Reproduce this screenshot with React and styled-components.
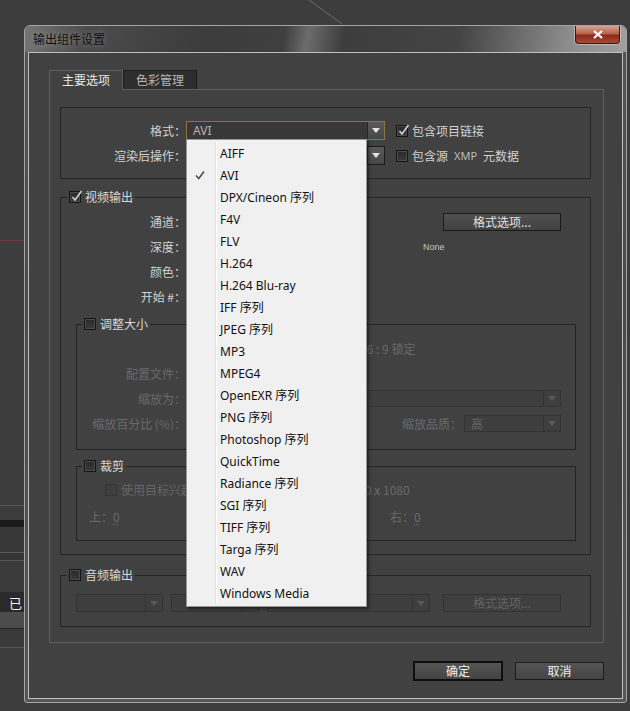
import React from 'react';
import styled, { createGlobalStyle } from 'styled-components';

const GlobalStyle = createGlobalStyle`
    html, body {
        margin: 0;
        padding: 0;
        background: #3d3d3d;
    }
    body {
        font-family: "Noto Sans", "Noto Sans CJK SC", sans-serif;
        font-size: 12px;
    }
    * {
        box-sizing: border-box;
    }
`

const Desktop = styled.div`
    display: flex;
    width: 630px;
    height: 711px;
    overflow: hidden;
    background: #3d3d3d;
`
const SideStrip = styled.div`
    flex: none;
    width: 24px;
    display: flex;
    flex-direction: column;
`
const Band = styled.div`
    flex: none;
    height: ${p => p.$h}px;
    background: ${p => p.$c || 'transparent'};
    color: #f2f2f2;
    font-family: "Noto Sans CJK SC", sans-serif;
    font-size: 13px;
    display: flex;
    align-items: center;
    justify-content: flex-end;
    padding-right: 2px;
`
const Stage = styled.div`
    flex: none;
    width: 603px;
    display: flex;
    flex-direction: column;
`
const Window = styled.div`
    width: 603px;
    border: 1px solid #a4a4a4;
    border-radius: 6px 6px 3px 3px;
    background: linear-gradient(180deg, #555 0%, #4a4a4a 40%, #565656 100%);
    overflow: hidden;
`
const TitleBar = styled.div`
    height: 26px;
    display: flex;
    align-items: flex-start;
    justify-content: space-between;
    padding-left: 8px;
    background: linear-gradient(100deg, #767676 0%, #4c4c4c 10%, #3c3c3c 30%, #3f3f3f 43%, #6c6c6c 47%, #3d3d3d 53%, #444 72%, #8c8c8c 90%, #a0a0a0 100%);
`
const Title = styled.span`
    font-family: "Noto Sans CJK SC", sans-serif;
    font-size: 12px;
    line-height: 26px;
    color: #111;
    text-shadow: 0 0 6px rgba(255, 255, 255, 0.35);
`
const CloseButton = styled.div`
    width: 45px;
    height: 18px;
    margin-right: 6px;
    border: 1px solid #3a1810;
    border-top: none;
    border-radius: 0 0 4px 4px;
    background: linear-gradient(180deg, #d9a294 0%, #b9604c 45%, #8d2b1b 55%, #a94a36 100%);
    box-shadow: 0 0 0 1px rgba(255, 255, 255, 0.35);
    display: flex;
    align-items: center;
    justify-content: center;
`
const Client = styled.div`
    margin: 0 3px 3px;
    border: 1px solid #bfbfbf;
    background: #414141;
    padding: 17px 18px 17px 20px;
    display: flex;
    flex-direction: column;
`
const Tabs = styled.div`
    display: flex;
    align-items: flex-end;
    height: 19px;
    position: relative;
    z-index: 1;
`
const Tab = styled.div`
    width: 74px;
    height: ${p => (p.$active ? 20 : 19)}px;
    margin-bottom: ${p => (p.$active ? -1 : 0)}px;
    align-self: flex-start;
    border: 1px solid ${p => (p.$active ? '#5e5e5e' : '#1d1d1d')};
    border-bottom: none;
    background: ${p => (p.$active ? '#414141' : '#2e2e2e')};
    color: ${p => (p.$active ? '#e8e8e8' : '#b8b8b8')};
    font-family: "Noto Sans CJK SC", sans-serif;
    font-size: 12px;
    line-height: 18px;
    text-align: center;
`
const Panel = styled.div`
    border: 1px solid #5e5e5e;
    padding: 17px 12px 15px 10px;
    display: flex;
    flex-direction: column;
`
const FormatBox = styled.div`
    border: 1px solid #242424;
    padding: 13px 0;
    display: grid;
    grid-template-columns: 125px 199px 1fr;
    row-gap: 6px;
    align-items: center;
`
const Group = styled.fieldset`
    margin: ${p => p.$m || '0'};
    padding: ${p => p.$pad};
    border: 1px solid #242424;
    min-width: 0;
    display: flex;
    flex-direction: column;
    gap: ${p => p.$gap || 0}px;
`
const Legend = styled.legend`
    margin-left: ${p => p.$ml}px;
    padding: 0 2px;
    line-height: 14px;
`
const LegendInner = styled.span`
    display: flex;
    align-items: center;
    gap: 4px;
    color: #d8d8d8;
    font-family: "Noto Sans CJK SC", sans-serif;
    font-size: 12px;
`
const Row = styled.div`
    display: grid;
    grid-template-columns: ${p => p.$cols};
    height: ${p => p.$h || 18}px;
    align-items: center;
    padding-left: ${p => p.$pl || 0}px;
`
const FlexRow = styled.div`
    display: flex;
    align-items: center;
    gap: ${p => p.$gap || 0}px;
    height: ${p => p.$h || 18}px;
    padding-left: ${p => p.$pl || 0}px;
    padding-right: ${p => p.$pr || 0}px;
`
const Label = styled.span`
    text-align: ${p => p.$align || 'right'};
    white-space: nowrap;
    color: ${p => (p.$dim ? '#6a6a6a' : '#d2d2d2')};
    font-family: "Noto Sans CJK SC", sans-serif;
    font-size: 12px;
    line-height: 14px;
    padding-left: ${p => p.$pl || 0}px;
`
const Value = styled.span`
    text-decoration: underline dotted;
    text-underline-offset: 2px;
`
const Tiny = styled.span`
    padding-left: ${p => p.$pl}px;
    color: #c4c4c4;
    font-family: "Liberation Sans", sans-serif;
    font-size: 9px;
`
const CheckLine = styled.label`
    display: flex;
    align-items: center;
    gap: 4px;
    margin-left: ${p => p.$ml || 0}px;
    color: ${p => (p.$dim ? '#666' : '#d2d2d2')};
    font-family: "Noto Sans", "Noto Sans CJK SC", sans-serif;
    font-size: 12px;
    white-space: nowrap;
`
const Xmp = styled.span`
    font-size: 11px;
    color: #bdbdbd;
    margin: 0 2px;
`
const CheckSquare = styled.span`
    position: relative;
    flex: none;
    width: 12px;
    height: 12px;
    border: 1px solid ${p => (p.$off ? '#343434' : '#151515')};
    background: ${p => (p.$off ? '#3e3e3e' : 'linear-gradient(180deg, #292929, #3a3a3a)')};
    box-shadow: ${p => (p.$off ? 'none' : 'inset 0 0 0 1px #4a4a4a')};
    & svg {
        position: absolute;
        left: 0;
        top: -3px;
    }
`
const SelectBox = styled.div`
    position: relative;
    flex: none;
    display: flex;
    width: ${p => p.$w}px;
    height: ${p => p.$h || 18}px;
    margin-left: ${p => (p.$push ? 'auto' : '0')};
    border: 1px solid ${p => (p.$focus ? '#8a7444' : p.$off ? '#333' : '#1c1c1c')};
    background: ${p => (p.$off ? '#3e3e3e' : '#383838')};
`
const SelectText = styled.span`
    flex: 1;
    display: flex;
    align-items: center;
    padding-left: 6px;
    color: ${p => (p.$off ? '#666' : '#b4b4b4')};
    font-family: "Noto Sans", "Noto Sans CJK SC", sans-serif;
    font-size: 12px;
`
const SelectArrow = styled.span`
    flex: none;
    width: 17px;
    border-left: 1px solid ${p => (p.$off ? '#343434' : '#262626')};
    background: ${p => (p.$off ? '#3e3e3e' : 'linear-gradient(180deg, #5a5a5a, #474747)')};
    display: flex;
    align-items: center;
    justify-content: center;
    &::after {
        content: '';
        border-left: 4px solid transparent;
        border-right: 4px solid transparent;
        border-top: 5px solid ${p => (p.$off ? '#595959' : '#e4e4e4')};
    }
`
const Button = styled.div`
    flex: none;
    width: ${p => p.$w || 118}px;
    height: 18px;
    margin-left: auto;
    margin-right: ${p => p.$mr || 0}px;
    border: 1px solid ${p => (p.$off ? '#333' : '#1a1a1a')};
    background: ${p => (p.$off ? '#3f3f3f' : 'linear-gradient(180deg, #505050, #414141)')};
    color: ${p => (p.$off ? '#646464' : '#e2e2e2')};
    font-family: "Noto Sans CJK SC", sans-serif;
    font-size: 12px;
    line-height: 16px;
    text-align: center;
`
const LabelCell = styled(Label)`
    flex: none;
    width: ${p => p.$w}px;
    margin-left: ${p => (p.$push ? 'auto' : '0')};
    padding-right: ${p => p.$pr || 0}px;
`
const Footer = styled.div`
    display: flex;
    justify-content: flex-end;
    align-items: center;
    gap: 12px;
    margin-top: 18px;
    height: 20px;
`
const DialogButton = styled.div`
    width: ${p => (p.$primary ? 90 : 89)}px;
    height: ${p => (p.$primary ? 20 : 18)}px;
    border: ${p => (p.$primary ? '2px solid #0e0e0e' : '1px solid #1b1b1b')};
    background: linear-gradient(180deg, #545454, #444);
    color: #f0f0f0;
    font-family: "Noto Sans CJK SC", sans-serif;
    font-size: 12px;
    line-height: 16px;
    text-align: center;
`
const Menu = styled.div`
    position: absolute;
    z-index: 10;
    top: 100%;
    left: -1px;
    width: 181px;
    padding: 2px;
    background: #f0f0f0;
    border: 1px solid #979797;
    box-shadow: 2px 2px 3px rgba(0, 0, 0, 0.45);
    &::before {
        content: '';
        position: absolute;
        top: 2px;
        bottom: 2px;
        left: 28px;
        width: 1px;
        background: #e0e0e0;
        box-shadow: 1px 0 0 #fff;
    }
`
const MenuItem = styled.div`
    position: relative;
    height: 22px;
    display: flex;
    align-items: center;
    padding-left: 31px;
    color: #111;
    font-family: "Noto Sans", "Noto Sans CJK SC", sans-serif;
    font-size: 12px;
    white-space: nowrap;
    & svg {
        position: absolute;
        left: 5px;
        top: 6px;
    }
`

const formats = [
    'AIFF', 'AVI', 'DPX/Cineon 序列', 'F4V', 'FLV', 'H.264', 'H.264 Blu-ray',
    'IFF 序列', 'JPEG 序列', 'MP3', 'MPEG4', 'OpenEXR 序列', 'PNG 序列',
    'Photoshop 序列', 'QuickTime', 'Radiance 序列', 'SGI 序列', 'TIFF 序列',
    'Targa 序列', 'WAV', 'Windows Media',
]

function Check({ on, off }) {
    return (
        <CheckSquare $off={off}>
            {on && (
                <svg width="13" height="14" viewBox="0 0 13 14">
                    <path d="M2.5 8 L5 11 L11.5 2" stroke="#d0d0d0" strokeWidth="1.6" fill="none" />
                </svg>
            )}
        </CheckSquare>
    )
}

function Select({ w, h, text, off, focus, push, children }) {
    return (
        <SelectBox $w={w} $h={h} $off={off} $focus={focus} $push={push}>
            <SelectText $off={off}>{text}</SelectText>
            <SelectArrow $off={off} />
            {children}
        </SelectBox>
    )
}

function FormatMenu() {
    return (
        <Menu>
            {formats.map(name => (
                <MenuItem key={name}>
                    {name === 'AVI' && (
                        <svg width="12" height="11" viewBox="0 0 12 11">
                            <path d="M2 5.5 L4.8 8.5 L10 1.5" stroke="#4a4a4a" strokeWidth="1.5" fill="none" />
                        </svg>
                    )}
                    {name}
                </MenuItem>
            ))}
        </Menu>
    )
}

export default function App() {
    return (
        <Desktop>
            <GlobalStyle />
            <SideStrip>
                <Band $h={240} />
                <Band $h={1} $c="#6d3c3c" />
                <Band $h={264} />
                <Band $h={1} $c="#5a5a5a" />
                <Band $h={14} />
                <Band $h={7} $c="#1b1b1b" />
                <Band $h={25} $c="#383838" />
                <Band $h={1} $c="#5a5a5a" />
                <Band $h={7} $c="#353535" />
                <Band $h={1} $c="#555" />
                <Band $h={31} $c="#3b3b3b" />
                <Band $h={20} $c="#2a2a2a">已</Band>
                <Band $h={16} $c="#4c4c4c" />
                <Band $h={1} $c="#262626" />
                <Band $h={18} $c="#3a3a3a" />
                <Band $h={1} $c="#555" />
            </SideStrip>
            <Stage>
                <svg width="603" height="25" viewBox="0 0 603 25" style={{ display: 'block', flex: 'none' }}>
                    <line x1="285" y1="0" x2="318" y2="24" stroke="#6c6c6c" strokeWidth="1" />
                </svg>
                <Window>
                    <TitleBar>
                        <Title>输出组件设置</Title>
                        <CloseButton>
                            <svg width="10" height="9" viewBox="0 0 10 9">
                                <path d="M1 1 L9 8 M9 1 L1 8" stroke="#fff" strokeWidth="2.2" />
                            </svg>
                        </CloseButton>
                    </TitleBar>
                    <Client>
                        <Tabs>
                            <Tab $active>主要选项</Tab>
                            <Tab>色彩管理</Tab>
                        </Tabs>
                        <Panel>
                            <FormatBox>
                                <Label>格式：</Label>
                                <Select w={199} h={19} text="AVI" focus>
                                    <FormatMenu />
                                </Select>
                                <CheckLine $ml={11}><Check on />包含项目链接</CheckLine>
                                <Label>渲染后操作：</Label>
                                <Select w={199} h={19} text="无" />
                                <CheckLine $ml={11}><Check />包含源<Xmp>XMP</Xmp>元数据</CheckLine>
                            </FormatBox>

                            <Group $m="11px 0 0" $pad="9px 0 13px" $gap={7}>
                                <Legend $ml={6}>
                                    <LegendInner><Check on />视频输出</LegendInner>
                                </Legend>
                                <Row $cols="125px 1fr auto">
                                    <Label>通道：</Label>
                                    <span />
                                    <Button $mr={29}>格式选项...</Button>
                                </Row>
                                <Row $cols="125px 1fr">
                                    <Label>深度：</Label>
                                    <Tiny $pl={237}>None</Tiny>
                                </Row>
                                <Row $cols="125px 1fr">
                                    <Label>颜色：</Label>
                                    <span />
                                </Row>
                                <Row $cols="125px 1fr">
                                    <Label>开始 #：</Label>
                                    <span />
                                </Row>

                                <Group $m="4px 14px 0 15px" $pad="9px 0 17px" $gap={8}>
                                    <Legend $ml={5}>
                                        <LegendInner><Check />调整大小</LegendInner>
                                    </Legend>
                                    <Row $cols="109px 1fr" $h={17}>
                                        <span />
                                        <Label $dim $align="left" $pl={174}>16 : 9 锁定</Label>
                                    </Row>
                                    <Row $cols="109px 1fr" $h={17}>
                                        <Label $dim>配置文件：</Label>
                                        <span />
                                    </Row>
                                    <FlexRow $h={17} $pr={14}>
                                        <LabelCell $dim $w={109}>缩放为：</LabelCell>
                                        <Select w={375} h={17} off push />
                                    </FlexRow>
                                    <FlexRow $h={17} $pr={14}>
                                        <LabelCell $dim $w={109}>缩放百分比 (%)：</LabelCell>
                                        <LabelCell $dim $push $pr={2}>缩放品质：</LabelCell>
                                        <Select w={97} h={17} text="高" off />
                                    </FlexRow>
                                </Group>

                                <Group $m="2px 14px 0 15px" $pad="8px 0 15px" $gap={10}>
                                    <Legend $ml={5}>
                                        <LegendInner><Check />裁剪</LegendInner>
                                    </Legend>
                                    <Row $cols="268px 1fr" $h={17}>
                                        <CheckLine $ml={28} $dim><Check off />使用目标兴趣区域</CheckLine>
                                        <Label $dim $align="left">1920 x 1080</Label>
                                    </Row>
                                    <Row $cols="301px 1fr" $h={17} $pl={12}>
                                        <Label $dim $align="left">上：<Value>0</Value></Label>
                                        <Label $dim $align="left">右：<Value>0</Value></Label>
                                    </Row>
                                </Group>
                            </Group>

                            <Group $m="13px 0 0" $pad="12px 0 14px">
                                <Legend $ml={6}>
                                    <LegendInner><Check />音频输出</LegendInner>
                                </Legend>
                                <FlexRow $gap={8} $pl={15}>
                                    <Select w={87} off />
                                    <Select w={88} off />
                                    <Select w={163} off />
                                    <Button $off $mr={29}>格式选项...</Button>
                                </FlexRow>
                            </Group>
                        </Panel>
                        <Footer>
                            <DialogButton $primary>确定</DialogButton>
                            <DialogButton>取消</DialogButton>
                        </Footer>
                    </Client>
                </Window>
            </Stage>
        </Desktop>
    )
}
